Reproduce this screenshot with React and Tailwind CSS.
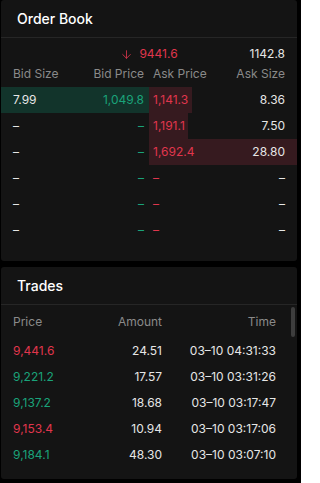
import React from 'react';
import { ArrowDown } from 'lucide-react';

const GREEN = 'text-[#1aa37a]';
const RED = 'text-[#e0364d]';

const book = [
  { bidSize: '7.99', bidPrice: '1,049.8', bidDepth: 100, askPrice: '1,141.3', askSize: '8.36', askDepth: 29 },
  { bidSize: '–', bidPrice: '–', bidDepth: 0, askPrice: '1,191.1', askSize: '7.50', askDepth: 26.5 },
  { bidSize: '–', bidPrice: '–', bidDepth: 0, askPrice: '1,692.4', askSize: '28.80', askDepth: 100 },
  { bidSize: '–', bidPrice: '–', bidDepth: 0, askPrice: '–', askSize: '–', askDepth: 0 },
  { bidSize: '–', bidPrice: '–', bidDepth: 0, askPrice: '–', askSize: '–', askDepth: 0 },
  { bidSize: '–', bidPrice: '–', bidDepth: 0, askPrice: '–', askSize: '–', askDepth: 0 },
];

const trades = [
  { price: '9,441.6', up: false, amount: '24.51', time: '03–10 04:31:33' },
  { price: '9,221.2', up: true, amount: '17.57', time: '03–10 03:31:26' },
  { price: '9,137.2', up: true, amount: '18.68', time: '03–10 03:17:47' },
  { price: '9,153.4', up: false, amount: '10.94', time: '03–10 03:17:06' },
  { price: '9,184.1', up: true, amount: '48.30', time: '03–10 03:07:10' },
];

const Panel = ({ title, className, children }) => (
  <div className={`ml-px w-[296px] bg-[#141414] rounded-[3px] ${className}`}>
    <div className="h-[38px] border-b border-[#262626] flex items-center pl-4">
      <h2 className="text-[14px] font-medium text-white">{title}</h2>
    </div>
    {children}
  </div>
);

const OrderBook = () => (
  <Panel title="Order Book" className="h-[261px]">
    <div className="pt-[6px] text-[12px]">
      <div className="h-5 grid grid-cols-[1fr_auto_1fr] items-center px-3">
        <span />
        <span className={`flex items-center gap-[6px] ${RED}`}>
          <ArrowDown size={13} strokeWidth={1.5} />
          9441.6
        </span>
        <span className="text-right text-[#e6e6e6]">1142.8</span>
      </div>
      <div className="h-5 flex items-center text-[#8a8a8a]">
        <div className="w-[148px] flex justify-between pl-3 pr-[5px]">
          <span>Bid Size</span>
          <span>Bid Price</span>
        </div>
        <div className="w-[148px] flex justify-between pl-[4px] pr-3">
          <span>Ask Price</span>
          <span>Ask Size</span>
        </div>
      </div>
      <div className="mt-[3px]">
        {book.map((r, i) => (
          <div key={i} className="h-[26px] flex">
            <div className="relative w-[148px] flex items-center justify-between pl-3 pr-[5px]">
              <div className="absolute inset-y-0 right-0 bg-[#12342b]" style={{ width: `${r.bidDepth}%` }} />
              <span className="relative text-[#e6e6e6]">{r.bidSize}</span>
              <span className={`relative ${GREEN}`}>{r.bidPrice}</span>
            </div>
            <div className="relative w-[148px] flex items-center justify-between pl-[4px] pr-3">
              <div className="absolute inset-y-0 left-0 bg-[#361a1f]" style={{ width: `${r.askDepth}%` }} />
              <span className={`relative ${RED}`}>{r.askPrice}</span>
              <span className="relative text-[#e6e6e6]">{r.askSize}</span>
            </div>
          </div>
        ))}
      </div>
    </div>
  </Panel>
);

const Trades = () => (
  <Panel title="Trades" className="mt-[6px] h-[212px]">
    <div className="relative pt-[7px] text-[12px]">
      <div className="absolute top-[2px] right-[2px] w-[4px] h-[30px] rounded-full bg-[#3d3d3d]" />
      <div className="h-5 flex items-center pl-3 pr-[21px] text-[#8a8a8a]">
        <span className="w-[80px]">Price</span>
        <span className="w-[69px] text-right">Amount</span>
        <span className="flex-1 text-right">Time</span>
      </div>
      <div className="mt-[6px]">
        {trades.map((t, i) => (
          <div key={i} className="h-[26px] flex items-center pl-3 pr-[21px] text-[#e6e6e6]">
            <span className={`w-[80px] ${t.up ? GREEN : RED}`}>{t.price}</span>
            <span className="w-[69px] text-right">{t.amount}</span>
            <span className="flex-1 text-right">{t.time}</span>
          </div>
        ))}
      </div>
    </div>
  </Panel>
);

export default function App() {
  return (
    <div className="w-[301px] h-[483px] bg-black font-['Inter',sans-serif]">
      <OrderBook />
      <Trades />
    </div>
  );
}
